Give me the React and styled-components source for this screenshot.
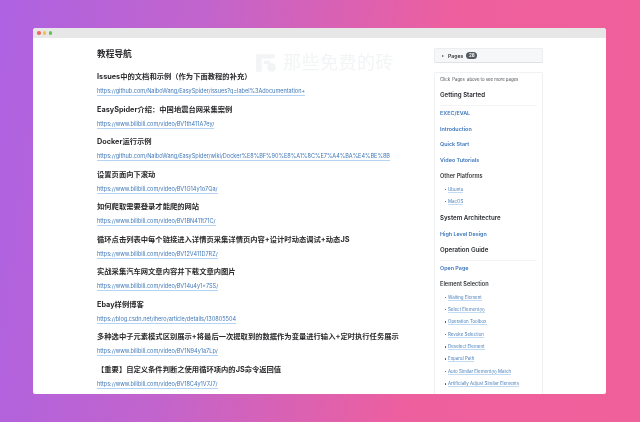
import styled, { createGlobalStyle } from 'styled-components';

const GlobalStyle = createGlobalStyle`
  html, body {
    margin: 0;
    padding: 0;
    width: 640px;
    height: 423px;
    overflow: hidden;
    background: #fff;
  }
  * { box-sizing: border-box; }
`;

const Page = styled.div`
  width: 640px;
  height: 422px;
  padding: 28px 34px 0 33px;
  background: linear-gradient(97deg, #ae62e2 0%, #c264cc 30%, #ee5f9e 66%, #f0609a 100%);
  font-family: Inter, 'Noto Sans CJK SC', sans-serif;
  filter: blur(0.35px);
`;

const Browser = styled.div`
  position: relative;
  width: 573px;
  height: 366px;
  background: #fff;
  border-radius: 3px 3px 2px 2px;
  overflow: hidden;
`;

const TitleBar = styled.div`
  display: flex;
  align-items: center;
  gap: 2.2px;
  height: 10px;
  padding-left: 4px;
  background: #e7e7e7;
`;

const Dot = styled.span`
  width: 3.6px;
  height: 3.6px;
  border-radius: 50%;
  background: ${(p) => p.$color};
`;

const Body = styled.div`
  display: flex;
  height: 356px;
  padding: 10px 0 0 64px;
`;

const Article = styled.main`
  width: 337px;
`;

const Title = styled.h1`
  margin: 0 0 9px;
  font-size: 8.7px;
  line-height: 13px;
  font-weight: 700;
  color: #2a2a2d;
`;

const Entry = styled.section`
  height: 32.55px;
`;

const EntryTitle = styled.h2`
  margin: 0;
  height: 18px;
  font-size: 7.3px;
  line-height: 13px;
  font-weight: 700;
  color: #2a2a2d;
  white-space: nowrap;
`;

const EntryLink = styled.a`
  display: block;
  width: fit-content;
  font-size: 5.55px;
  line-height: 7px;
  color: #3f78b8;
  border-bottom: 1px solid #b5d3f2;
  white-space: nowrap;
`;

const Watermark = styled.div`
  position: absolute;
  left: 222px;
  top: 25px;
  display: flex;
  align-items: center;
  gap: 6px;
  font-size: 18px;
  line-height: 20px;
  letter-spacing: 0.5px;
  color: #f3f4f5;
`;

const Aside = styled.aside`
  display: flex;
  flex-direction: column;
  gap: 9px;
  width: 109px;
`;

const PagesBar = styled.div`
  display: flex;
  align-items: center;
  gap: 3px;
  height: 15px;
  padding-left: 7px;
  background: #f6f7f8;
  border: 1px solid #eceef0;
  border-bottom-color: #dfe1e4;
  border-radius: 1.5px;
  font-size: 5.2px;
  font-weight: 600;
  color: #33373c;
`;

const Caret = styled.span`
  width: 0;
  height: 0;
  border-top: 1.4px solid transparent;
  border-bottom: 1.4px solid transparent;
  border-left: 2px solid #4a4f55;
  margin-right: 1px;
`;

const Count = styled.span`
  height: 7px;
  padding: 0 2.5px;
  border-radius: 4px;
  background: #555b63;
  color: #fff;
  font-size: 4.6px;
  line-height: 7px;
`;

const Panel = styled.nav`
  height: 322px;
  padding: 3px 5px 0;
  border: 1px solid #f0f1f3;
  border-bottom: 0;
  border-radius: 1.5px 1.5px 0 0;
`;

const Hint = styled.p`
  margin: 0 0 4.7px;
  font-size: 4.3px;
  line-height: 7px;
  color: #4b4f55;
  white-space: nowrap;
`;

const HintCode = styled.code`
  padding: 0 1px;
  font-family: inherit;
`;

const SectionTitle = styled.h3`
  margin: 0;
  height: ${(p) => p.$height || 18.5}px;
  padding-top: 1.5px;
  font-size: 6.15px;
  line-height: 11px;
  font-weight: 600;
  color: #2a2c30;
  border-bottom: ${(p) => (p.$plain ? 'none' : '1px solid #f3f4f5')};
  white-space: nowrap;
`;

const NavLink = styled.a`
  display: block;
  height: 15.6px;
  padding-top: 3px;
  font-size: 5.4px;
  line-height: 9px;
  font-weight: 600;
  color: #3b76bb;
`;

const GroupTitle = styled.h4`
  margin: 0;
  height: 17px;
  padding-top: 3.2px;
  font-size: 5.6px;
  line-height: 8px;
  font-weight: 600;
  color: #33363a;
`;

const List = styled.ul`
  margin: 0;
  padding: 0 0 0 8px;
  list-style: none;
`;

const Item = styled.li`
  position: relative;
  height: 12.4px;
  font-size: 4.45px;
  line-height: 8px;
  white-space: nowrap;
  &::before {
    content: '';
    position: absolute;
    left: -3.5px;
    top: 3px;
    width: 1.5px;
    height: 1.5px;
    border-radius: 50%;
    background: #44484e;
  }
`;

const ItemLink = styled.a`
  color: #4d80bb;
  border-bottom: 0.6px solid #c3daf3;
`;

const entries = [
  ['Issues中的文档和示例（作为下面教程的补充）', 'https://github.com/NaiboWang/EasySpider/issues?q=label%3Adocumentation+'],
  ['EasySpider介绍：中国地震台网采集案例', 'https://www.bilibili.com/video/BV1th411A7ey/'],
  ['Docker运行示例', 'https://github.com/NaiboWang/EasySpider/wiki/Docker%E8%BF%90%E8%A1%8C%E7%A4%BA%E4%BE%8B'],
  ['设置页面向下滚动', 'https://www.bilibili.com/video/BV1G14y1o7Qa/'],
  ['如何爬取需要登录才能爬的网站', 'https://www.bilibili.com/video/BV1BN411t71C/'],
  ['循环点击列表中每个链接进入详情页采集详情页内容+设计时动态调试+动态JS', 'https://www.bilibili.com/video/BV12V411D7RZ/'],
  ['实战采集汽车网文章内容并下载文章内图片', 'https://www.bilibili.com/video/BV14u4y1x7SS/'],
  ['Ebay样例博客', 'https://blog.csdn.net/ihero/article/details/130805504'],
  ['多种选中子元素模式区别展示+将最后一次提取到的数据作为变量进行输入+定时执行任务展示', 'https://www.bilibili.com/video/BV1N94y1a7Lp/'],
  ['【重要】自定义条件判断之使用循环项内的JS命令返回值', 'https://www.bilibili.com/video/BV18C4y1V7J7/'],
];

const selection = [
  'Waiting Element',
  'Select Element(s)',
  'Operation Toolbox',
  'Revoke Selection',
  'Deselect Element',
  'Expand Path',
  'Auto Similar Element(s) Match',
  'Artificially Adjust Similar Elements',
];

function WatermarkLogo() {
  return (
    <svg width="22" height="20" viewBox="0 0 20 18" fill="#f3f4f5">
      <path d="M1 1h17v4H6v12H1z" />
      <path d="M8 7h6v3H8z" />
      <circle cx="15" cy="13" r="4" />
    </svg>
  );
}

export default function App() {
  return (
    <>
      <GlobalStyle />
      <Page>
        <Browser>
          <TitleBar>
            <Dot $color="#ee6a5f" />
            <Dot $color="#f4bf50" />
            <Dot $color="#5fc454" />
          </TitleBar>
          <Body>
            <Article>
              <Title>教程导航</Title>
              {entries.map(([title, url]) => (
                <Entry key={url}>
                  <EntryTitle>{title}</EntryTitle>
                  <EntryLink>{url}</EntryLink>
                </Entry>
              ))}
            </Article>
            <Aside>
              <PagesBar>
                <Caret />
                Pages
                <Count>26</Count>
              </PagesBar>
              <Panel>
                <Hint>Click <HintCode>Pages</HintCode> above to see more pages</Hint>
                <SectionTitle>Getting Started</SectionTitle>
                <NavLink>EXEC/EVAL</NavLink>
                <NavLink>Introduction</NavLink>
                <NavLink>Quick Start</NavLink>
                <NavLink>Video Tutorials</NavLink>
                <GroupTitle>Other Platforms</GroupTitle>
                <List>
                  <Item><ItemLink>Ubuntu</ItemLink></Item>
                  <Item><ItemLink>MacOS</ItemLink></Item>
                </List>
                <SectionTitle $height={16.5} $plain>System Architecture</SectionTitle>
                <NavLink>High Level Design</NavLink>
                <SectionTitle>Operation Guide</SectionTitle>
                <NavLink>Open Page</NavLink>
                <GroupTitle>Element Selection</GroupTitle>
                <List>
                  {selection.map((name) => (
                    <Item key={name}><ItemLink>{name}</ItemLink></Item>
                  ))}
                </List>
              </Panel>
            </Aside>
          </Body>
          <Watermark>
            <WatermarkLogo />
            那些免费的砖
          </Watermark>
        </Browser>
      </Page>
    </>
  );
}
